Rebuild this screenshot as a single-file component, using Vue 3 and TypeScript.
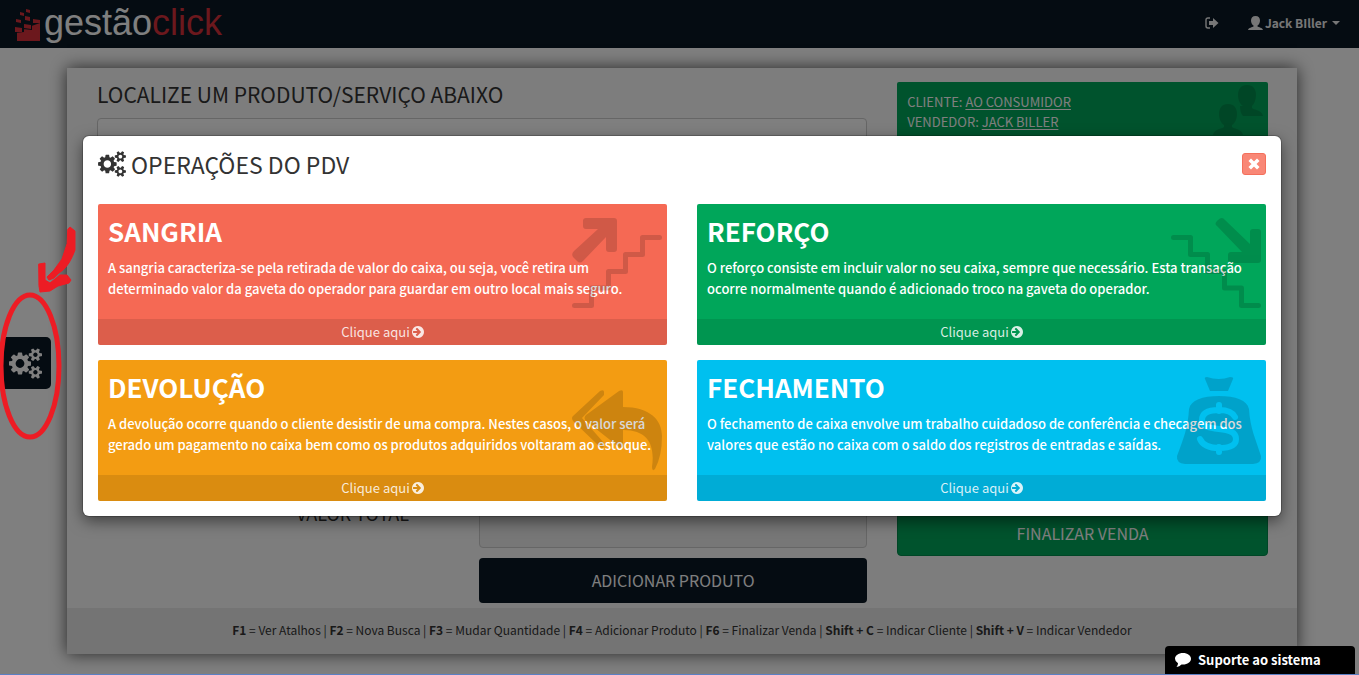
<script setup lang="ts">
import { ref } from 'vue'

interface Operation {
  id: string
  title: string
  lines: string[]
}

const operations: Operation[] = [
  {
    id: 'sangria',
    title: 'SANGRIA',
    lines: [
      'A sangria caracteriza-se pela retirada de valor do caixa, ou seja, você retira um',
      'determinado valor da gaveta do operador para guardar em outro local mais seguro.',
    ],
  },
  {
    id: 'reforco',
    title: 'REFORÇO',
    lines: [
      'O reforço consiste em incluir valor no seu caixa, sempre que necessário. Esta transação',
      'ocorre normalmente quando é adicionado troco na gaveta do operador.',
    ],
  },
  {
    id: 'devolucao',
    title: 'DEVOLUÇÃO',
    lines: [
      'A devolução ocorre quando o cliente desistir de uma compra. Nestes casos, o valor será',
      'gerado um pagamento no caixa bem como os produtos adquiridos voltaram ao estoque.',
    ],
  },
  {
    id: 'fechamento',
    title: 'FECHAMENTO',
    lines: [
      'O fechamento de caixa envolve um trabalho cuidadoso de conferência e checagem dos',
      'valores que estão no caixa com o saldo dos registros de entradas e saídas.',
    ],
  },
]

const shortcuts = [
  { key: 'F1', label: 'Ver Atalhos' },
  { key: 'F2', label: 'Nova Busca' },
  { key: 'F3', label: 'Mudar Quantidade' },
  { key: 'F4', label: 'Adicionar Produto' },
  { key: 'F6', label: 'Finalizar Venda' },
  { key: 'Shift + C', label: 'Indicar Cliente' },
  { key: 'Shift + V', label: 'Indicar Vendedor' },
]

const product = ref('')
const total = ref('')

const cogs =
  'M896 896q0-106-75-181t-181-75-181 75-75 181 75 181 181 75 181-75 75-181zM1664 1408q0-52-38-90t-90-38-90 38-38 90q0 53 37.5 90.5t90.5 37.5 90.5-37.5 37.5-90.5zM1664 384q0-52-38-90t-90-38-90 38-38 90q0 53 37.5 90.5t90.5 37.5 90.5-37.5 37.5-90.5zM1280 805v185q0 10-7 19.5t-16 10.5l-155 24q-11 35-32 76 34 48 90 115 7 11 7 20 0 12-7 19-23 30-82.5 89.5t-78.5 59.5q-11 0-21-7l-115-90q-37 19-77 31-11 108-23 155-7 24-30 24h-186q-11 0-20-7.5t-10-17.5l-23-153q-34-10-75-31l-118 89q-7 7-20 7-11 0-21-8-144-133-144-160 0-9 7-19 10-14 41-53t47-61q-23-44-35-82l-152-24q-10-1-17-9.5t-7-19.5v-185q0-10 7-19.5t16-10.5l155-24q11-35 32-76-34-48-90-115-7-11-7-20 0-12 7-20 22-30 82-89t79-59q11 0 21 7l115 90q34-18 77-32 11-108 23-154 7-24 30-24h186q11 0 20 7.5t10 17.5l23 153q34 10 75 31l118-89q8-7 20-7 11 0 21 8 144 133 144 160 0 8-7 19-12 16-42 54t-45 60q23 48 34 82l152 23q10 2 17 10.5t7 19.5zM1920 1338v140q0 16-149 31-12 27-30 52 51 113 51 138 0 4-4 7-122 71-124 71-8 0-46-47t-52-68q-20 2-30 2t-30-2q-14 21-52 68t-46 47q-2 0-124-71-4-3-4-7 0-25 51-138-18-25-30-52-149-15-149-31v-140q0-16 149-31 13-29 30-52-51-113-51-138 0-4 4-7 4-2 35-20t59-34 30-16q8 0 46 46.5t52 67.5q20-2 30-2t30 2q51-71 92-112l6-2q4 0 124 70 4 3 4 7 0 25-51 138 17 23 30 52 149 15 149 31zM1920 314v140q0 16-149 31-12 27-30 52 51 113 51 138 0 4-4 7-122 71-124 71-8 0-46-47t-52-68q-20 2-30 2t-30-2q-14 21-52 68t-46 47q-2 0-124-71-4-3-4-7 0-25 51-138-18-25-30-52-149-15-149-31v-140q0-16 149-31 13-29 30-52-51-113-51-138 0-4 4-7 4-2 35-20t59-34 30-16q8 0 46 46.5t52 67.5q20-2 30-2t30 2q51-71 92-112l6-2q4 0 124 70 4 3 4 7 0 25-51 138 17 23 30 52 149 15 149 31z'
const arrowCircle =
  'M1285 896q0-27-18-45l-91-91-362-362q-18-18-45-18t-45 18l-91 91q-18 18-18 45t18 45l189 189h-502q-26 0-45 19t-19 45v128q0 26 19 45t45 19h502l-189 189q-19 19-19 45t19 45l91 91q18 18 45 18t45-18l362-362 91-91q18-18 18-45zM1664 896q0 209-103 385.5t-279.5 279.5-385.5 103-385.5-103-279.5-279.5-103-385.5 103-385.5 279.5-279.5 385.5-103 385.5 103 279.5 279.5 103 385.5z'
const person =
  'M15 0C21 0 24 4 24 10C24 15 22 19 19 21V23C21 25 29 25 30 31H0C1 25 9 25 11 23V21C8 19 6 15 6 10C6 4 9 0 15 0Z'
</script>

<template>
  <div class="screen">
    <header class="navbar">
      <a class="brand" href="#" aria-label="gestãoclick">
        <svg class="brand-mark" viewBox="0 0 26 34" aria-hidden="true">
          <path d="M2 22L25 14V32H2Z" />
          <path class="gap" d="M0 16L9 17V23L0 24ZM8 12L17 14V21L8 20Z" />
          <path d="M0 18L7 19V23H0ZM9 15L16 16V20L9 19ZM18 10L25 11V14L18 14ZM1 10L6 11V14L1 13ZM10 7L15 8V12L10 11ZM5 3L9 4V7L5 6ZM11 0L15 1V4L11 3Z" />
        </svg>
        <span>gestão<span class="brand-red">click</span></span>
      </a>
      <nav class="nav-links">
        <button class="nav-btn" type="button" aria-label="Sair">
          <svg width="14" height="12" viewBox="0 0 14 12" aria-hidden="true">
            <path d="M5 1H3Q1 1 1 3V9Q1 11 3 11H5" fill="none" stroke="currentColor" stroke-width="1.4" />
            <path d="M4 4H8V1L13.500 6L8 11V8H4Z" fill="currentColor" />
          </svg>
        </button>
        <button class="nav-btn" type="button">
          <svg width="15" height="14" viewBox="0 0 30 31" preserveAspectRatio="none" aria-hidden="true">
            <path :d="person" fill="currentColor" />
          </svg>
          <span class="user-name">Jack BIller</span>
          <span class="caret"></span>
        </button>
      </nav>
    </header>

    <main class="panel">
      <div class="columns">
        <section class="sale">
          <label class="heading" for="product">LOCALIZE UM PRODUTO/SERVIÇO ABAIXO</label>
          <input id="product" v-model="product" class="field" type="text" />
          <div class="total-row">
            <label class="total-label" for="total">VALOR TOTAL</label>
            <input id="total" v-model="total" class="field readonly" type="text" readonly />
            <button class="btn dark" type="button">ADICIONAR PRODUTO</button>
          </div>
        </section>
        <aside class="summary">
          <div class="client">
            <p>CLIENTE: <a href="#">AO CONSUMIDOR</a></p>
            <p>VENDEDOR: <a href="#">JACK BILLER</a></p>
            <svg class="people" width="50" height="50" viewBox="0 0 50 50" aria-hidden="true">
              <path d="M34 0C40 0 43 4 43 10C43 15 41 19 39 21V23C41 25 49 25 50 31H30Q27 28 27 21H30C27 19 25 15 25 10C25 4 28 0 34 0Z" />
              <path :d="person" transform="translate(0 19)" />
            </svg>
          </div>
          <button class="btn green" type="button">FINALIZAR VENDA</button>
        </aside>
      </div>
      <footer class="shortcuts">
        <span v-for="(s, i) in shortcuts" :key="s.key"><template v-if="i">&nbsp;| </template><b>{{ s.key }}</b> = {{ s.label }}</span>
      </footer>
    </main>

    <button class="side-tab" type="button" aria-label="Operações">
      <svg width="33" height="31" viewBox="0 0 1920 1792" aria-hidden="true"><path :d="cogs" fill="currentColor" /></svg>
    </button>

    <div class="backdrop">
      <section class="modal" role="dialog" aria-labelledby="modal-title">
        <header class="modal-head">
          <h2 id="modal-title">
            <svg width="28" height="26" viewBox="0 0 1920 1792" aria-hidden="true"><path :d="cogs" fill="currentColor" /></svg>
            OPERAÇÕES DO PDV
          </h2>
          <button class="close" type="button" aria-label="Fechar">
            <svg width="12" height="12" viewBox="0 0 12 12" aria-hidden="true">
              <path d="M3 3L9 9M9 3L3 9" stroke="currentColor" stroke-width="3.600" stroke-linecap="square" stroke-linejoin="round" />
            </svg>
          </button>
        </header>
        <div class="cards">
          <article v-for="op in operations" :key="op.id" class="card" :class="op.id">
            <div class="card-body">
              <h3>{{ op.title }}</h3>
              <p><span v-for="line in op.lines" :key="line">{{ line }}</span></p>
            </div>
            <svg class="card-icon" width="90" height="90" viewBox="0 0 90 90" aria-hidden="true">
              <template v-if="op.id === 'sangria'">
                <path d="M14 0H42Q45 0 45 3V31Q45 34 42 34H37Q34 34 34 31V19L11 43Q8 46 5 43L1 39Q-1 36 2 33L26 11H14Q11 11 11 8V3Q11 0 14 0Z" />
                <path class="stairs" d="M2.500 87.500H19.500V70H36.500V53.500H53.500V36.500H70.500V19.500H87.500" />
              </template>
              <template v-else-if="op.id === 'reforco'">
                <path d="M47 2L46 3Q43 6 46 8L71 34H60Q57 34 57 37V42Q57 45 60 45H87Q90 45 90 42V14Q90 11 87 11H82Q79 11 79 14V26L54 2Q51 -2 47 2Z" />
                <path class="stairs" d="M2.500 19.500H19.500V36.500H36.500V53.500H53.500V70H70.500V87.500H87.500" />
              </template>
              <template v-else-if="op.id === 'devolucao'">
                <path d="M28 17Q32 15 32 18V21L10 44L32 69V72Q31 75 28 73L1 47Q-1 44 1 42Z" />
                <path d="M47 17Q51 15 51 18V33C78 33 90 46 90 62Q90 82 83 95Q80 98 80 93C83 72 77 56 51 56V72Q50 75 47 73L14 47Q11 44 14 41Z" />
              </template>
              <template v-else>
                <mask id="coin-cut">
                  <rect width="90" height="92" fill="#fff" />
                  <path d="M64 43C61 37 55 36 48 36C38 36 31 39 31 46C31 53 39 54 48 55C58 56 65 58 65 65C65 72 57 74 48 74C39 74 32 72 29 65M48 31V37M48 73V78" fill="none" stroke="#000" stroke-width="6" stroke-linecap="round" />
                </mask>
                <g mask="url(#coin-cut)">
                  <path d="M34 5Q33 3 36 3Q48 7 59 3Q63 3 62 5L57 17H39Z" />
                  <path d="M48 22C65 22 76 26 78 35C79 54 85 66 90 82Q91 89 82 90H14Q5 89 6 82C12 66 17 54 18 35C20 26 31 22 48 22Z" />
                </g>
              </template>
            </svg>
            <button class="card-foot" type="button">
              Clique aqui
              <svg width="12" height="12" viewBox="128 128 1536 1536" aria-hidden="true"><path :d="arrowCircle" fill="currentColor" /></svg>
            </button>
          </article>
        </div>
      </section>
    </div>

    <button class="support" type="button">
      <svg width="16" height="14" viewBox="0 0 16 14" aria-hidden="true">
        <path d="M8 0C12.500 0 16 2.500 16 5.700S12.500 11.500 8 11.500L6.500 11.400Q4.500 13.500 1.500 14Q3 12.500 3 10.200Q0 8.500 0 5.700C0 2.500 3.500 0 8 0Z" fill="currentColor" />
      </svg>
      Suporte ao sistema
    </button>
    <div class="bottom-line"></div>

    <svg class="marker" width="80" height="220" viewBox="0 0 80 220" aria-hidden="true">
      <ellipse cx="30" cy="140" rx="29" ry="71" stroke-width="5" />
      <path class="ink" d="M68 3L70 1L75 5V24Q70 38 63 44Q57 48 54 52L49 54L47 51L54 44L62 33L67 18Z" />
      <path class="ink" d="M39 38L45 37V54L50 57L60 49L67 49L71 54L69 57L58 60L50 65L40 66L39 60Z" />
    </svg>
  </div>
</template>

<style>
body {
  margin: 0;
  background: #fff;
}
</style>

<style scoped>
.screen {
  position: relative;
  min-height: 100vh;
  overflow: hidden;
  box-sizing: border-box;
  font-family: "Noto Sans CJK JP", "Noto Sans", sans-serif;
  font-size: 13px;
  line-height: 20px;
  color: #333;
}
.screen *,
.screen *::before {
  box-sizing: border-box;
}
button,
input {
  font: inherit;
}
button {
  border: 0;
  margin: 0;
  cursor: pointer;
}
p,
h2,
h3 {
  margin: 0;
}
svg {
  display: block;
}

.navbar {
  display: flex;
  align-items: center;
  justify-content: space-between;
  height: 48px;
  padding: 0 19px 2px 15px;
  background: #0a1824;
  color: #eee;
}
.brand {
  display: flex;
  align-items: center;
  gap: 3px;
  color: #fff;
  font-family: "Liberation Sans", Arial, sans-serif;
  font-size: 36px;
  line-height: 42px;
  text-decoration: none;
}
.brand-mark {
  width: 26px;
  height: 34px;
  margin-top: 6px;
  fill: #d8303a;
}
.brand-mark .gap {
  fill: #0a1824;
}
.brand-red {
  color: #d8303a;
}
.nav-links {
  display: flex;
  gap: 29px;
}
.nav-btn {
  display: flex;
  align-items: center;
  gap: 2px;
  padding: 0;
  background: none;
  color: inherit;
  font-weight: bold;
  font-size: 12px;
}
.caret {
  margin-left: 3px;
  border: 4px solid transparent;
  border-top-color: currentColor;
  border-bottom: 0;
}

.panel {
  margin: 20px 62px 21px 67px;
  background: #fafafa;
  box-shadow: 0 0 16px rgba(0, 0, 0, 0.7);
}
.columns {
  display: grid;
  grid-template-columns: 27fr 13fr;
  gap: 30px;
  padding: 14px 29px 5px 30px;
}
.sale {
  display: flex;
  flex-direction: column;
}
.heading {
  font-size: 21px;
  line-height: 24px;
}
.field {
  width: 100%;
  height: 46px;
  padding: 10px 16px;
  border: 1px solid #ccc;
  border-radius: 4px;
  background: #fff;
}
.sale > .field {
  margin-top: 12px;
}
.readonly {
  background: #eee;
}
.total-row {
  display: grid;
  grid-template-columns: 382fr 388fr;
  row-gap: 10px;
  margin-top: 338px;
}
.total-label {
  padding-right: 70px;
  font-size: 18px;
  line-height: 22px;
  text-align: right;
}
.btn {
  height: 45px;
  padding: 0 6px 2px;
  border-radius: 4px;
  color: #fff;
  font-size: 16px;
}
.dark {
  grid-column: 2;
  background: #0a1824;
}
.green {
  margin-top: 349px;
  border: 1px solid #008d4c;
  background: #00a65a;
}
.summary {
  display: flex;
  flex-direction: column;
}
.client {
  position: relative;
  height: 80px;
  padding: 10px;
  border-radius: 2px;
  background: #00a65a;
  color: #fff;
}
.client a {
  color: inherit;
  text-underline-offset: 2px;
}
.people {
  position: absolute;
  top: 3px;
  right: 5px;
  fill: rgba(0, 0, 0, 0.15);
}
.shortcuts {
  padding: 12px 10px 14px;
  background: #e8e8e8;
  font-size: 12px;
  text-align: center;
}

.side-tab {
  position: absolute;
  top: 337px;
  left: 3px;
  display: flex;
  align-items: center;
  width: 48px;
  height: 52px;
  padding: 0 6px;
  border-radius: 0 5px 5px 0;
  background: #0a1824;
  color: #fff;
}

.backdrop {
  position: absolute;
  inset: 0;
  padding: 136px 78px 0 83px;
  background: rgba(0, 0, 0, 0.5);
}
.modal {
  padding: 15px;
  border-radius: 6px;
  background: #fff;
  box-shadow: 0 5px 15px rgba(0, 0, 0, 0.5), 0 0 0 1px rgba(0, 0, 0, 0.2);
}
.modal-head {
  display: flex;
  align-items: flex-start;
  justify-content: space-between;
  padding-bottom: 27px;
}
.modal-head h2 {
  display: flex;
  align-items: center;
  gap: 5px;
  font-size: 23px;
  font-weight: normal;
  line-height: 26px;
}
.close {
  display: flex;
  align-items: center;
  justify-content: center;
  width: 24px;
  height: 22px;
  margin-top: 2px;
  padding: 0;
  border: 1px solid #f4705c;
  border-radius: 3px;
  background: #f98776;
  color: #fff;
}
.cards {
  display: grid;
  grid-template-columns: 1fr 1fr;
  gap: 15px 30px;
}
.card {
  position: relative;
  display: flex;
  flex-direction: column;
  border-radius: 2px;
  overflow: hidden;
  color: #fff;
}
.card-body {
  min-height: 115px;
  padding: 10px 0 0 10px;
}
.card h3 {
  font-size: 26px;
  line-height: 33px;
}
.card p {
  padding-top: 10px;
  font-weight: 500;
  line-height: 21px;
  white-space: nowrap;
}
.card p span {
  display: block;
}
.card-icon {
  position: absolute;
  top: 14px;
  right: 5px;
  overflow: visible;
  opacity: 0.15;
  pointer-events: none;
}
.stairs {
  fill: none;
  stroke: #000;
  stroke-width: 5;
  stroke-linecap: round;
  stroke-linejoin: round;
}
.card-foot {
  display: flex;
  align-items: center;
  justify-content: center;
  gap: 2px;
  height: 26px;
  padding: 0;
  background: rgba(0, 0, 0, 0.1);
  color: rgba(255, 255, 255, 0.85);
}
.sangria {
  background: #f56954;
}
.reforco {
  background: #00a65a;
}
.devolucao {
  background: #f39c12;
}
.fechamento {
  background: #00c0ef;
}

.support {
  position: absolute;
  right: 4px;
  bottom: 0;
  display: flex;
  align-items: center;
  gap: 7px;
  width: 190px;
  height: 29px;
  padding: 0 10px 2px;
  border-radius: 4px 4px 0 0;
  background: #000;
  color: #fff;
  font-weight: bold;
}
.bottom-line {
  position: absolute;
  right: 0;
  bottom: 0;
  left: 0;
  height: 1px;
  background: #5b7fc4;
}
.marker {
  position: absolute;
  top: 226px;
  left: 0;
  fill: none;
  stroke: #ed1c24;
  stroke-linecap: round;
  stroke-linejoin: round;
  pointer-events: none;
}
.ink {
  fill: #ed1c24;
  stroke-width: 1;
}
</style>
